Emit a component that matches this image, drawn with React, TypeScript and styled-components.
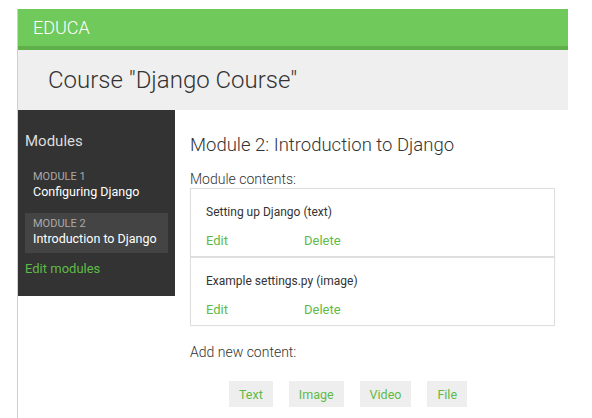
import React from 'react';
import styled, { createGlobalStyle } from 'styled-components';

const GlobalStyle = createGlobalStyle`
  body {
    margin: 0;
    background: #fff;
    font-family: Roboto, "Liberation Sans", sans-serif;
    color: #333;
  }
`;

const Page = styled.div`
  margin: 9px 0 0 17px;
  width: 550px;
  min-height: 409px;
  border-left: 1px solid #cfcfcf;
`;

const Header = styled.header`
  height: 37px;
  background: #70c95b;
  border-bottom: 4px solid #5fb04b;
  display: flex;
  align-items: center;
  padding-left: 15px;
  color: #fff;
  font-size: 18px;
  font-weight: 300;
`;

const TitleBar = styled.div`
  height: 60px;
  background: #efefef;
  display: flex;
  align-items: center;
  padding-left: 30px;

  h1 {
    margin: 0;
    font-size: 24px;
    font-weight: 300;
    color: #333;
  }
`;

const Main = styled.div`
  display: flex;
  align-items: flex-start;
`;

const Sidebar = styled.nav`
  width: 157px;
  box-sizing: border-box;
  background: #333;
  padding: 22px 7px 19px 7px;

  h3 {
    margin: 0 0 16px;
    font-size: 15px;
    font-weight: 400;
    color: #ddd;
  }
`;

const ModuleItem = styled.div<{ active?: boolean }>`
  padding: 4px 8px 6px;
  margin-bottom: 7px;
  white-space: nowrap;
  background: ${p => (p.active ? '#444' : 'transparent')};

  &:last-of-type {
    margin-bottom: 5px;
  }

  span {
    display: block;
    font-size: 11px;
    color: #aaa;
    line-height: 13px;
  }
  div {
    font-size: 12.5px;
    color: #fff;
    line-height: 17px;
  }
`;

const GreenLink = styled.a`
  color: #5fba48;
  font-size: 13px;
  text-decoration: none;
`;

const Content = styled.section`
  margin-left: 15px;
  width: 365px;
  padding-top: 24px;

  h2 {
    margin: 0 0 15px;
    font-size: 18.5px;
    font-weight: 300;
    color: #333;
  }
`;

const Label = styled.div<{ gap?: number }>`
  margin-top: ${p => p.gap ?? 0}px;
  font-size: 14px;
  font-weight: 300;
  color: #333;
  line-height: 17px;
`;

const ContentList = styled.div`
  box-shadow: 0 0 1px rgba(0, 0, 0, 0.08);
`;

const ContentItem = styled.div`
  border: 1px solid #dedede;
  padding: 16px 15px 0;
  box-sizing: border-box;
  height: 69px;
  font-size: 12px;
  color: #333;
`;

const Actions = styled.div`
  display: flex;
  margin-top: 14px;

  a:first-child {
    width: 98px;
  }
`;

const Buttons = styled.div`
  display: flex;
  gap: 16px;
  margin: 20px 0 0 39px;
`;

const AddButton = styled.button`
  height: 26px;
  padding: 0 10px;
  border: none;
  background: #eee;
  color: #5fba48;
  font-family: Roboto, "Liberation Sans", sans-serif;
  font-size: 12.5px;
`;

const items = ['Setting up Django (text)', 'Example settings.py (image)'];

const App: React.FC = () => {
  return (
    <>
      <GlobalStyle />
      <Page>
        <Header>EDUCA</Header>
        <TitleBar>
          <h1>Course "Django Course"</h1>
        </TitleBar>
        <Main>
          <Sidebar>
            <h3>Modules</h3>
            <ModuleItem>
              <span>MODULE 1</span>
              <div>Configuring Django</div>
            </ModuleItem>
            <ModuleItem active>
              <span>MODULE 2</span>
              <div>Introduction to Django</div>
            </ModuleItem>
            <GreenLink href="#">Edit modules</GreenLink>
          </Sidebar>
          <Content>
            <h2>Module 2: Introduction to Django</h2>
            <Label>Module contents:</Label>
            <ContentList>
              {items.map(title => (
                <ContentItem key={title}>
                  {title}
                  <Actions>
                    <GreenLink href="#">Edit</GreenLink>
                    <GreenLink href="#">Delete</GreenLink>
                  </Actions>
                </ContentItem>
              ))}
            </ContentList>
            <Label gap={18}>Add new content:</Label>
            <Buttons>
              <AddButton>Text</AddButton>
              <AddButton>Image</AddButton>
              <AddButton>Video</AddButton>
              <AddButton>File</AddButton>
            </Buttons>
          </Content>
        </Main>
      </Page>
    </>
  );
};

export default App;
